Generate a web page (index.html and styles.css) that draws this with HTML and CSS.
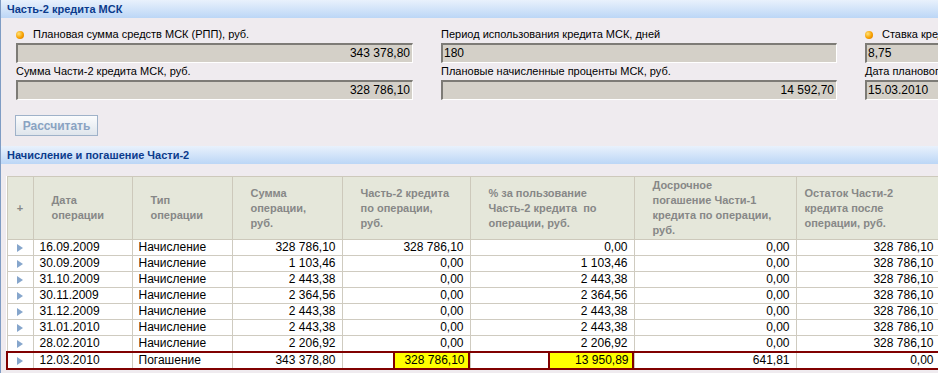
FILE: index.html
```html
<!DOCTYPE html>
<html>
<head>
<meta charset="utf-8">
<title>Часть-2 кредита МСК</title>
<link rel="stylesheet" href="styles.css">
</head>
<body>
<div class="frame">

<!-- Параметры кредита -->
<div class="bar">Часть-2 кредита МСК</div>
<div class="params">
    <div class="field">
        <div class="label req">Плановая сумма средств МСК (РПП), руб.</div>
        <div class="input num">343 378,80</div>
    </div>
    <div class="field">
        <div class="label">Период использования кредита МСК, дней</div>
        <div class="input">180</div>
    </div>
    <div class="field">
        <div class="label req">Ставка кредита МСК, % годовых</div>
        <div class="input">8,75</div>
    </div>
    <div class="field">
        <div class="label">Сумма Части-2 кредита МСК, руб.</div>
        <div class="input num">328 786,10</div>
    </div>
    <div class="field">
        <div class="label">Плановые начисленные проценты МСК, руб.</div>
        <div class="input num">14 592,70</div>
    </div>
    <div class="field">
        <div class="label">Дата планового погашения МСК</div>
        <div class="input">15.03.2010</div>
    </div>
</div>
<div class="actions">
    <button class="btn" type="button" disabled>Рассчитать</button>
</div>

<!-- Начисление и погашение -->
<div class="bar">Начисление и погашение Части-2</div>
<table class="grid">
    <colgroup>
        <col class="c-exp">
        <col class="c-date">
        <col class="c-type">
        <col class="c-sum">
        <col class="c-part">
        <col class="c-pct">
        <col class="c-early">
        <col class="c-rest">
    </colgroup>
    <thead>
        <tr>
            <th class="exp">+</th>
            <th>Дата<br>операции</th>
            <th>Тип<br>операции</th>
            <th>Сумма<br>операции,<br>руб.</th>
            <th>Часть-2 кредита<br>по операции,<br>руб.</th>
            <th>% за пользование<br>Часть-2 кредита&nbsp; по<br>операции, руб.</th>
            <th>Досрочное<br>погашение Части-1<br>кредита по операции,<br>руб.</th>
            <th class="last">Остаток Части-2<br>кредита после<br>операции, руб.</th>
        </tr>
    </thead>
    <tbody>
        <tr>
            <td class="exp"><span class="arrow"></span></td>
            <td>16.09.2009</td><td>Начисление</td>
            <td class="num">328 786,10</td><td class="num">328 786,10</td><td class="num">0,00</td>
            <td class="num">0,00</td><td class="num">328 786,10</td>
        </tr>
        <tr>
            <td class="exp"><span class="arrow"></span></td>
            <td>30.09.2009</td><td>Начисление</td>
            <td class="num">1 103,46</td><td class="num">0,00</td><td class="num">1 103,46</td>
            <td class="num">0,00</td><td class="num">328 786,10</td>
        </tr>
        <tr>
            <td class="exp"><span class="arrow"></span></td>
            <td>31.10.2009</td><td>Начисление</td>
            <td class="num">2 443,38</td><td class="num">0,00</td><td class="num">2 443,38</td>
            <td class="num">0,00</td><td class="num">328 786,10</td>
        </tr>
        <tr>
            <td class="exp"><span class="arrow"></span></td>
            <td>30.11.2009</td><td>Начисление</td>
            <td class="num">2 364,56</td><td class="num">0,00</td><td class="num">2 364,56</td>
            <td class="num">0,00</td><td class="num">328 786,10</td>
        </tr>
        <tr>
            <td class="exp"><span class="arrow"></span></td>
            <td>31.12.2009</td><td>Начисление</td>
            <td class="num">2 443,38</td><td class="num">0,00</td><td class="num">2 443,38</td>
            <td class="num">0,00</td><td class="num">328 786,10</td>
        </tr>
        <tr>
            <td class="exp"><span class="arrow"></span></td>
            <td>31.01.2010</td><td>Начисление</td>
            <td class="num">2 443,38</td><td class="num">0,00</td><td class="num">2 443,38</td>
            <td class="num">0,00</td><td class="num">328 786,10</td>
        </tr>
        <tr>
            <td class="exp"><span class="arrow"></span></td>
            <td>28.02.2010</td><td>Начисление</td>
            <td class="num">2 206,92</td><td class="num">0,00</td><td class="num">2 206,92</td>
            <td class="num">0,00</td><td class="num">328 786,10</td>
        </tr>
        <tr class="total">
            <td class="exp"><span class="arrow"></span></td>
            <td>12.03.2010</td><td>Погашение</td>
            <td class="num">343 378,80</td>
            <td class="hl"><span class="mark mark-sm">328 786,10</span></td>
            <td class="hl"><span class="mark mark-lg">13 950,89</span></td>
            <td class="num">641,81</td><td class="num">0,00</td>
        </tr>
    </tbody>
</table>

</div>
</body>
</html>
```

FILE: styles.css
```css
html, body {
    margin: 0px;
    padding: 0px;
}
body {
    font-family: "Liberation Sans", Arial, sans-serif;
    font-size: 11px;
    color: #000;
    background: #efebef;
    overflow: hidden;
}
.frame {
    border-left: 1px solid #7f9cc4;
    min-height: 373px;
    box-sizing: border-box;
    overflow: hidden;
}
.bar {
    height: 18px;
    line-height: 18px;
    padding-left: 6px;
    background: linear-gradient(#e9f1fc, #bcd6f6);
    color: #0b3b8c;
    font-size: 11px;
    font-weight: bold;
    white-space: nowrap;
}
.params {
    display: grid;
    grid-template-columns: 397px 396px 400px;
    column-gap: 28px;
    padding: 8px 0px 0px 15px;
    width: max-content;
}
.label {
    height: 17px;
    line-height: 17px;
    white-space: nowrap;
}
.req::before {
    content: "";
    display: inline-block;
    width: 8px;
    height: 8px;
    margin-right: 9px;
    border-radius: 50%;
    vertical-align: -1px;
    background: radial-gradient(circle at 35% 35%, #ffe27a, #f7a100 55%, #d26f00);
}
.input {
    box-sizing: border-box;
    height: 20px;
    padding: 0px 2px 0px 1px;
    border-style: solid;
    border-width: 2px 1px 1px 2px;
    border-color: #7d7b76 #fff #fff #7d7b76;
    background: #d4d0c8;
    font-size: 12px;
    line-height: 17px;
    white-space: nowrap;
}
.num {
    text-align: right;
}
.actions {
    padding: 15px 0px 10px 14px;
}
.btn {
    display: block;
    width: 83px;
    height: 21px;
    margin: 0px;
    padding: 0px;
    font-family: "Liberation Sans", Arial, sans-serif;
    font-size: 12px;
    font-weight: bold;
    color: #8aa3c2;
    background: linear-gradient(#fbfcfd, #dfe5ec);
    border: 1px solid #9fb2c9;
}
.grid {
    border-collapse: collapse;
    table-layout: fixed;
    width: 933px;
    margin: 12px 0px 0px 5px;
    background: #fff;
}
.c-exp { width: 26px; }
.c-date { width: 99px; }
.c-type { width: 100px; }
.c-sum { width: 110px; }
.c-part { width: 128px; }
.c-pct { width: 164px; }
.c-early { width: 162px; }
.c-rest { width: 144px; }
.grid th {
    height: 62px;
    padding: 0px 4px 0px 18px;
    border: 1px solid #cdc9bb;
    background: #e5e7da;
    color: #878787;
    font-size: 11px;
    font-weight: bold;
    line-height: 15px;
    text-align: left;
    vertical-align: middle;
    white-space: nowrap;
}
.grid th.last {
    padding-left: 8px;
}
.grid th.exp {
    padding: 0px;
    text-align: center;
}
.grid td {
    height: 15px;
    padding: 0px 6px;
    border: 1px solid #cfcbc0;
    font-size: 12px;
    line-height: 15px;
    white-space: nowrap;
}
.grid td.exp {
    padding: 0px;
    text-align: center;
}
.arrow {
    display: inline-block;
    width: 0px;
    height: 0px;
    border-left: 6px solid #86a6cc;
    border-top: 4px solid transparent;
    border-bottom: 4px solid transparent;
    vertical-align: -1px;
}
.total td {
    border-top: 2px solid #800000;
    border-bottom: 2px solid #800000;
}
.total td:first-child {
    border-left: 2px solid #800000;
}
.grid td.hl {
    padding: 0px;
}
.mark {
    display: block;
    box-sizing: border-box;
    margin-left: auto;
    padding-right: 3px;
    border-left: 2px solid #800000;
    border-right: 2px solid #800000;
    background: #ffff00;
    text-align: right;
}
.mark-sm {
    width: 77px;
}
.mark-lg {
    width: 86px;
}
```
